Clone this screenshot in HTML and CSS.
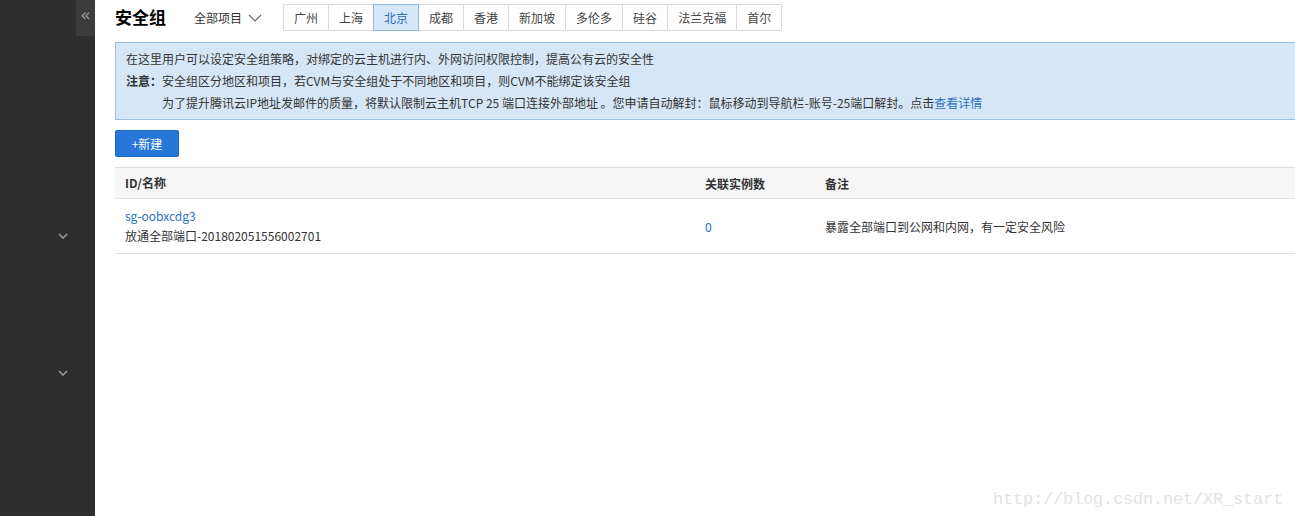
FILE: index.html
```html
<!DOCTYPE html>
<html lang="zh-CN">
<head>
<meta charset="utf-8">
<title>安全组</title>
<link rel="stylesheet" href="styles.css">
</head>
<body>
<div class="app">
  <aside class="sidebar">
    <div class="collapse">«</div>
    <div class="chev chev-1"><svg width="10" height="6" viewBox="0 0 10 6"><path d="M1 1 L5 5 L9 1" fill="none" stroke="#9a9a9a" stroke-width="1.6"/></svg></div>
    <div class="chev chev-2"><svg width="10" height="6" viewBox="0 0 10 6"><path d="M1 1 L5 5 L9 1" fill="none" stroke="#9a9a9a" stroke-width="1.6"/></svg></div>
  </aside>
  <main class="main">
    <div class="content">
      <header class="topbar">
        <h1 class="title">安全组</h1>
        <div class="project">全部项目 <svg class="proj-arrow" width="14" height="8" viewBox="0 0 14 8"><path d="M1 1 L7 7 L13 1" fill="none" stroke="#666" stroke-width="1.1"/></svg></div>
        <nav class="regions">
          <span class="tab">广州</span><span class="tab">上海</span><span class="tab active">北京</span><span class="tab">成都</span><span class="tab">香港</span><span class="tab">新加坡</span><span class="tab">多伦多</span><span class="tab">硅谷</span><span class="tab">法兰克福</span><span class="tab">首尔</span>
        </nav>
      </header>
      <div class="notice">
        <p>在这里用户可以设定安全组策略，对绑定的云主机进行内、外网访问权限控制，提高公有云的安全性</p>
        <p><b>注意：</b>安全组区分地区和项目，若CVM与安全组处于不同地区和项目，则CVM不能绑定该安全组</p>
        <p class="indent">为了提升腾讯云IP地址发邮件的质量，将默认限制云主机TCP 25 端口连接外部地址 。您申请自动解封：鼠标移动到导航栏-账号-25端口解封。点击<a class="link">查看详情</a></p>
      </div>
      <div class="actions"><button class="btn">+新建</button></div>
      <div class="table">
        <div class="row head">
          <div class="c1">ID/名称</div>
          <div class="c2">关联实例数</div>
          <div class="c3">备注</div>
        </div>
        <div class="row body">
          <div class="c1"><a class="link">sg-oobxcdg3</a><div>放通全部端口-201802051556002701</div></div>
          <div class="c2"><a class="link">0</a></div>
          <div class="c3">暴露全部端口到公网和内网，有一定安全风险</div>
        </div>
      </div>
    </div>
    <div class="watermark">http://blog.csdn.net/XR_start</div>
  </main>
</div>
</body>
</html>
```
FILE: styles.css
```css
* { box-sizing: border-box; }
html, body { margin: 0; padding: 0; height: 100%; overflow: hidden; background: #fff; }
body { font-family: "Noto Sans CJK SC", "Microsoft YaHei", sans-serif; font-size: 12px; color: #333; }
.app { display: flex; height: 516px; }
.sidebar { width: 95px; flex: none; background: #2e2e2e; position: relative; }
.collapse { position: absolute; right: 0; top: 0; width: 19px; height: 36px; background: #3c3c3c; color: #9a9a9a; font-size: 17px; line-height: 31px; text-align: center; font-family: "DejaVu Sans", sans-serif; }
.chev { position: absolute; left: 58px; }
.chev svg { display: block; }
.chev-1 { top: 233px; }
.chev-2 { top: 370px; }
.main { flex: 1; min-width: 0; overflow: hidden; position: relative; }
.content { width: 1220px; padding-left: 20px; }
.topbar { display: flex; align-items: center; height: 34px; }
.title { margin: 0; font-size: 17px; font-weight: bold; color: #000; width: 79px; line-height: 34px; }
.project { display: flex; align-items: center; gap: 6px; width: 89px; color: #333; }
.proj-arrow { margin-top: 1px; }
.regions { display: flex; }
.tab { height: 27px; line-height: 25px; padding: 0 10px; border: 1px solid #d9d9d9; margin-left: -1px; background: #fff; color: #444; }
.tab:first-child { margin-left: 0; }
.tab.active { background: #d6e7f7; border-color: #8fb6dc; color: #2a6fc0; position: relative; z-index: 1; }
.notice { margin-top: 8px; height: 78px; border: 1px solid #9ebfdc; background: #d5e7f6; padding: 5px 10px; }
.notice p { margin: 0; line-height: 22px; white-space: nowrap; }
.notice .indent { padding-left: 36px; }
.notice b { font-weight: bold; }
.link { color: #2a73c0; text-decoration: none; }
.actions { margin-top: 10px; }
.btn { height: 27px; width: 64px; border: 1px solid #1d66c2; background: #2677d9; color: #fff; font-family: inherit; font-size: 12px; border-radius: 2px; padding: 0; }
.table { margin-top: 10px; }
.row { display: flex; align-items: center; border-bottom: 1px solid #e3e3e3; }
.row.head { height: 32px; border-top: 1px solid #dcdcdc; background: #f6f6f6; font-weight: bold; color: #333; }
.row.body { height: 55px; }
.c1 { width: 590px; padding-left: 10px; line-height: 20px; }
.c2 { width: 120px; }
.c3 { flex: 1; }
.watermark { position: absolute; right: 12px; bottom: 7px; font-family: "Liberation Mono", monospace; font-size: 17px; color: #e3e3e3; letter-spacing: -0.2px; }
```
